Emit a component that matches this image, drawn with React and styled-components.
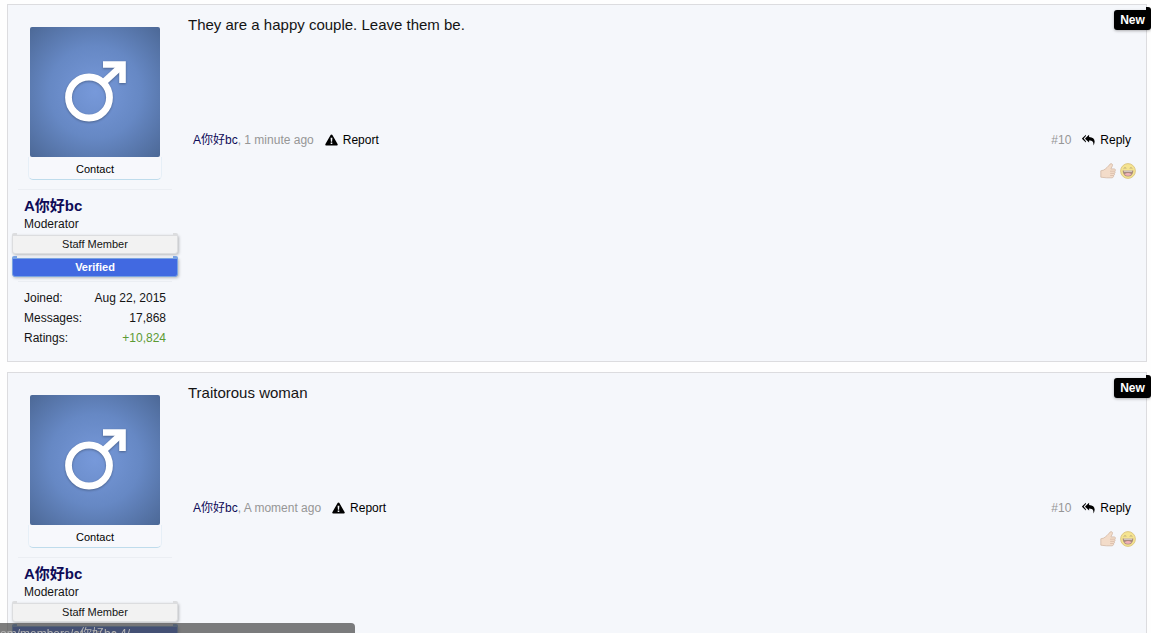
import React from "react";
import styled, { createGlobalStyle } from "styled-components";

const GlobalStyle = createGlobalStyle`
  * {
    box-sizing: border-box;
  }

  body {
    margin: 0;
    background: #fefefe;
    color: #141414;
    font-family: "Liberation Sans", Arial, "Noto Sans CJK SC", sans-serif;
    font-size: 12px;
    line-height: 20px;
  }

  a {
    color: inherit;
    text-decoration: none;
  }
`;

const Page = styled.main`
  height: 100vh;
  overflow: hidden;
  padding: 4px 4px 0 7px;
`;

const MessageList = styled.ol`
  list-style: none;
  margin: 0;
  padding: 0;
  display: flex;
  flex-direction: column;
  gap: 10px;
`;

const Post = styled.li`
  position: relative;
  display: flex;
  border: 1px solid #dcdcdf;
  background: #f5f7fb;
`;

const UserPanel = styled.aside`
  flex: none;
  width: 172px;
  padding: 22px 0 13px 4px;
`;

const AvatarLink = styled.a`
  display: block;
  width: 130px;
  height: 130px;
  margin-left: 18px;
  border-radius: 2px;
  background: radial-gradient(circle, #7799da 0%, #6688c4 50%, #4c6896 100%);

  svg {
    display: block;
    filter: drop-shadow(0 1px 1px rgba(0, 0, 0, 0.3));
  }
`;

const ContactButton = styled.button`
  display: block;
  width: 134px;
  height: 23px;
  margin: 0 0 9px 16px;
  padding: 2px 0 0;
  border: 1px solid #e6eff7;
  border-top: 0;
  border-bottom-color: #bfdcec;
  border-radius: 0 0 5px 5px;
  background: #f7f8fc;
  color: #000;
  font: inherit;
  font-size: 11px;
  cursor: pointer;
`;

const Divider = styled.hr`
  height: 1px;
  margin: 0 8px 0 6px;
  border: 0;
  background: #ebeef3;
`;

const UserName = styled.a`
  display: block;
  margin: 6px 0 0 12px;
  color: #0e0b57;
  font-size: 15px;
  font-weight: bold;
`;

const UserTitle = styled.div`
  margin: 0 0 3px 12px;
  line-height: 16px;
`;

const Banner = styled.em`
  position: relative;
  display: block;
  width: 166px;
  height: 19px;
  margin-bottom: 4px;
  border: 1px solid ${props => props.edge};
  border-radius: 0 0 3px 3px;
  background: ${props => props.fill};
  box-shadow: 1px 1px 3px rgba(0, 0, 0, 0.25);
  color: ${props => props.ink};
  font-size: 11px;
  font-style: normal;
  font-weight: ${props => (props.strong ? "bold" : "normal")};
  line-height: 17px;
  text-align: center;

  &::before,
  &::after {
    content: "";
    position: absolute;
    top: -3px;
    width: 5px;
    height: 3px;
    background: ${props => props.edge};
  }

  &::before {
    left: -1px;
    border-top-left-radius: 2px;
  }

  &::after {
    right: -1px;
    border-top-right-radius: 2px;
  }
`;

const Stats = styled.dl`
  margin: 6px 14px 0 12px;
`;

const Stat = styled.div`
  display: flex;
  justify-content: space-between;

  dt,
  dd {
    margin: 0;
  }

  dd {
    color: ${props => (props.positive ? "#5c9a33" : "inherit")};
  }
`;

const Content = styled.div`
  flex: 1;
  padding: 10px 10px 0 8px;
`;

const Body = styled.article`
  min-height: 110px;
  font-size: 15px;
`;

const Meta = styled.div`
  display: flex;
  justify-content: space-between;
  padding: 5px 5px 0;
  color: #969696;
`;

const MetaGroup = styled.div`
  display: flex;
  gap: 11px;
`;

const Author = styled.a`
  color: #0e0b57;
`;

const Control = styled.a`
  display: flex;
  align-items: center;
  gap: 5px;
  color: #000;
`;

const Ratings = styled.div`
  display: flex;
  justify-content: flex-end;
  gap: 4px;
  padding-top: 13px;
`;

const RatingButton = styled.button`
  width: 16px;
  height: 16px;
  padding: 0;
  border: 0;
  background: none;
  opacity: 0.6;
  cursor: pointer;

  svg {
    display: block;
  }
`;

const NewBadge = styled.strong`
  position: absolute;
  top: 5px;
  right: -5px;
  width: 37px;
  height: 20px;
  border-radius: 3px 0 3px 3px;
  background: #000;
  box-shadow: 0 1px 3px rgba(0, 0, 0, 0.3);
  color: #fff;
  text-align: center;

  &::before {
    content: "";
    position: absolute;
    top: -3px;
    right: 0;
    width: 5px;
    height: 3px;
    border-top-right-radius: 3px;
    background: #000;
  }
`;

const LinkStatus = styled.div`
  position: fixed;
  left: 0;
  bottom: 0;
  width: 355px;
  height: 10px;
  overflow: hidden;
  border-top-right-radius: 4px;
  background: rgba(70, 70, 70, 0.7);
  color: #b4b4b4;
  line-height: 22px;
  white-space: nowrap;
`;

const MaleSymbol = () => (
  <svg width="130" height="130" viewBox="0 0 130 130" fill="none" stroke="#fff">
    <circle cx="59" cy="70.5" r="20.5" strokeWidth="6.8" />
    <path d="M73.5 55.5L92 38.5" strokeWidth="6.6" />
    <path d="M73 37.5H92.5V56" strokeWidth="6.6" />
  </svg>
);

const WarningIcon = () => (
  <svg width="13" height="12" viewBox="0 0 13 12">
    <path
      d="M6.5 0.4Q7.1 0.4 7.4 1L12.7 10.3Q13 11.6 11.8 11.6H1.2Q0 11.6 0.3 10.3L5.6 1Q5.9 0.4 6.5 0.4Z"
      fill="#000"
    />
    <path d="M5.6 3.8H7.4L7.1 7.7H5.9ZM5.7 8.5H7.3V10H5.7Z" fill="#f5f7fb" />
  </svg>
);

const ReplyAllIcon = () => (
  <svg width="13" height="12" viewBox="0 0 13 12">
    <path
      d="M3.9 0.8V2L1.7 4.6L3.9 7.2V8.4L0.2 5Q-0.1 4.6 0.2 4.2ZM7.1 0.8V3C10.9 3.2 12.9 5 12.6 8C12.5 9.4 12 10.5 11.4 11.5C11.7 8 10.9 6.5 7.1 6.4V8.4L3.3 5Q3 4.6 3.3 4.2Z"
      fill="#000"
    />
  </svg>
);

const ThumbIcon = () => (
  <svg width="16" height="16" viewBox="0 0 16 16">
    <path
      d="M0.8 7.8L3.6 7.1C5.8 5.9 8.2 3.6 10 1.1C11.4 0 13.1 1.1 12.4 2.8L10.9 5.9H14.2C15.8 5.9 15.8 8 14.6 8.2C15.5 8.7 15.2 10.2 14.2 10.4C14.9 11 14.5 12.4 13.5 12.5C14 13.4 13.2 14.8 12 14.8H6.4L0.8 14.2Z"
      fill="#f2cba8"
      stroke="#b58562"
      strokeWidth="0.7"
    />
    <path
      d="M10 8.2H14.5M10.2 10.4H14.1M10.2 12.5H13.4"
      stroke="#c08d69"
      strokeWidth="0.7"
    />
  </svg>
);

const LaughIcon = () => (
  <svg width="16" height="16" viewBox="0 0 16 16">
    <circle cx="8" cy="8" r="7.4" fill="#f6d84a" stroke="#c9a12f" strokeWidth="0.9" />
    <path
      d="M3.6 5.6Q4.9 3.9 6.3 5.3M9.7 5.3Q11.1 3.9 12.4 5.6"
      fill="none"
      stroke="#8a6b24"
      strokeWidth="0.9"
    />
    <path d="M2.6 7.4H13.4Q13 13.5 8 13.5Q3 13.5 2.6 7.4Z" fill="#75452d" />
    <path d="M3.8 7.8H12.2L12 8.4H4Z" fill="#fff" />
    <path d="M4.4 11.3Q8 8.6 11.6 11.3Q8 14.3 4.4 11.3Z" fill="#f0838a" />
  </svg>
);

const posts = [
  { id: 1, text: "They are a happy couple. Leave them be.", time: "1 minute ago" },
  { id: 2, text: "Traitorous woman", time: "A moment ago" }
];

const UserInfo = () => (
  <UserPanel>
    <AvatarLink href="#member" aria-label="A你好bc">
      <MaleSymbol />
    </AvatarLink>
    <ContactButton type="button">Contact</ContactButton>
    <Divider />
    <UserName href="#member">A你好bc</UserName>
    <UserTitle>Moderator</UserTitle>
    <Banner fill="#f2f2f2" edge="#dcdddf" ink="#141414">
      Staff Member
    </Banner>
    <Banner fill="#4169e1" edge="#79a3e2" ink="#fff" strong>
      Verified
    </Banner>
    <Divider />
    <Stats>
      <Stat>
        <dt>Joined:</dt>
        <dd>Aug 22, 2015</dd>
      </Stat>
      <Stat>
        <dt>Messages:</dt>
        <dd>17,868</dd>
      </Stat>
      <Stat positive>
        <dt>Ratings:</dt>
        <dd>+10,824</dd>
      </Stat>
    </Stats>
  </UserPanel>
);

const Message = ({ post }) => (
  <Post>
    <UserInfo />
    <Content>
      <Body>{post.text}</Body>
      <Meta>
        <MetaGroup>
          <span>
            <Author href="#member">A你好bc</Author>, {post.time}
          </span>
          <Control href="#report">
            <WarningIcon />
            Report
          </Control>
        </MetaGroup>
        <MetaGroup>
          <a href="#post">#10</a>
          <Control href="#reply">
            <ReplyAllIcon />
            Reply
          </Control>
        </MetaGroup>
      </Meta>
      <Ratings>
        <RatingButton type="button" aria-label="Like">
          <ThumbIcon />
        </RatingButton>
        <RatingButton type="button" aria-label="Funny">
          <LaughIcon />
        </RatingButton>
      </Ratings>
    </Content>
    <NewBadge>New</NewBadge>
  </Post>
);

const App = () => (
  <>
    <GlobalStyle />
    <Page>
      <MessageList>
        {posts.map(post => (
          <Message key={post.id} post={post} />
        ))}
      </MessageList>
    </Page>
    <LinkStatus>om/members/a你好bc.4/</LinkStatus>
  </>
);

export default App;
